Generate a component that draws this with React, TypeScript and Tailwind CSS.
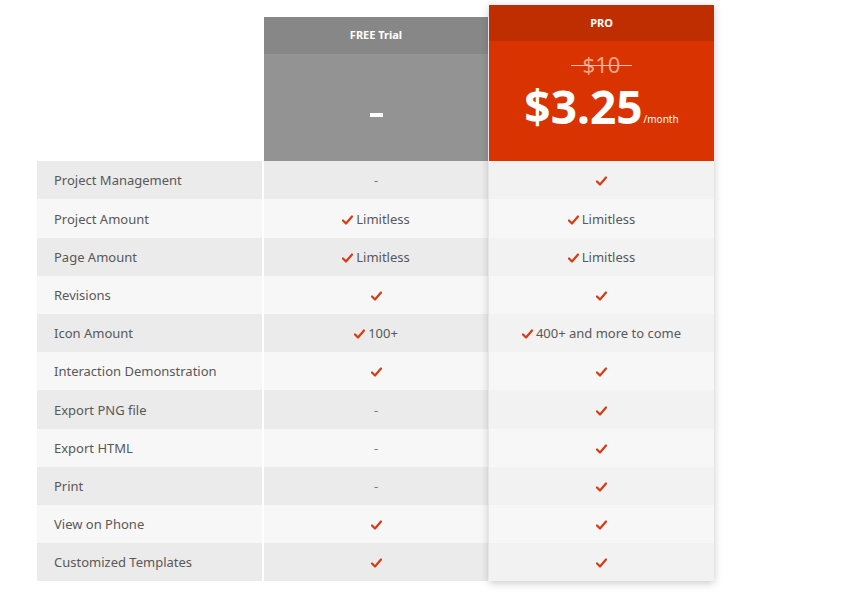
import React from "react";

type Cell = { check?: boolean; text?: string; dash?: boolean };

const rows: { label: string; free: Cell; pro: Cell }[] = [
  { label: "Project Management", free: { dash: true }, pro: { check: true } },
  { label: "Project Amount", free: { check: true, text: "Limitless" }, pro: { check: true, text: "Limitless" } },
  { label: "Page Amount", free: { check: true, text: "Limitless" }, pro: { check: true, text: "Limitless" } },
  { label: "Revisions", free: { check: true }, pro: { check: true } },
  { label: "Icon Amount", free: { check: true, text: "100+" }, pro: { check: true, text: "400+ and more to come" } },
  { label: "Interaction Demonstration", free: { check: true }, pro: { check: true } },
  { label: "Export PNG file", free: { dash: true }, pro: { check: true } },
  { label: "Export HTML", free: { dash: true }, pro: { check: true } },
  { label: "Print", free: { dash: true }, pro: { check: true } },
  { label: "View on Phone", free: { check: true }, pro: { check: true } },
  { label: "Customized Templates", free: { check: true }, pro: { check: true } },
];

function Check() {
  return (
    <svg width="11" height="10" viewBox="0 0 11 10" className="shrink-0">
      <path d="M1 5.5 L4 8.5 L10 1.5" fill="none" stroke="#d83a14" strokeWidth="2.2" strokeLinecap="round" strokeLinejoin="round" />
    </svg>
  );
}

function Value({ cell }: { cell: Cell }) {
  if (cell.dash) return <span className="text-[#777]">-</span>;
  return (
    <span className="flex items-center gap-[3px]">
      {cell.check && <Check />}
      {cell.text && <span>{cell.text}</span>}
    </span>
  );
}

// rows in the picture run a hair over 38px each
const rowH = ["h-[38px]", "h-[39px]", "h-[38px]", "h-[38px]", "h-[38px]", "h-[38px]", "h-[39px]", "h-[38px]", "h-[38px]", "h-[38px]", "h-[38px]"];

export default function App() {
  return (
    <div className="w-[851px] h-[603px] bg-white text-[13px] text-[#585858] font-['Noto_Sans','Open_Sans',sans-serif]">
      <div className="flex items-end pl-[37px] pt-[5px]">
        <div className="w-[225px]">
          {rows.map((r, i) => (
            <div key={r.label} className={`${rowH[i]} flex items-center pl-[17px] pt-[2px] ${i % 2 === 0 ? "bg-[#ebebeb]" : "bg-[#f7f7f7]"}`}>
              {r.label}
            </div>
          ))}
        </div>
        <div className="w-[224px] ml-[2px]">
          <div className="h-[37px] bg-[#878787] flex items-center justify-center text-white text-[11px] font-bold">FREE Trial</div>
          <div className="h-[107px] bg-[#939393] flex items-center justify-center pt-[14px]">
            <div className="w-[13px] h-[4px] bg-white" />
          </div>
          {rows.map((r, i) => (
            <div key={r.label} className={`${rowH[i]} flex items-center justify-center pt-[2px] ${i % 2 === 0 ? "bg-[#ebebeb]" : "bg-[#f7f7f7]"}`}>
              <Value cell={r.free} />
            </div>
          ))}
        </div>
        <div className="w-[225px] ml-[1px] shadow-[0_2px_8px_rgba(0,0,0,0.22)]">
          <div className="h-[36px] bg-[#bf2e00] flex items-center justify-center text-white text-[11px] font-bold">PRO</div>
          <div className="h-[120px] bg-[#d83300] flex flex-col items-center text-white">
            <div className="relative mt-[10px] text-[22px] leading-[26px] text-[#f2a58a]">
              $10
              <div className="absolute left-[-12px] right-[-12px] top-[14px] h-px bg-[#f6c4b2]" />
            </div>
            <div className="flex items-end mt-[4px]">
              <span className="text-[46px] leading-[50px] font-bold">$3.25</span>
              <span className="text-[10px] mb-[4px] ml-[1px]">/month</span>
            </div>
          </div>
          {rows.map((r, i) => (
            <div key={r.label} className={`${rowH[i]} flex items-center justify-center pt-[2px] ${i % 2 === 0 ? "bg-[#f2f2f2]" : "bg-[#f7f7f7]"}`}>
              <Value cell={r.pro} />
            </div>
          ))}
        </div>
      </div>
    </div>
  );
}
